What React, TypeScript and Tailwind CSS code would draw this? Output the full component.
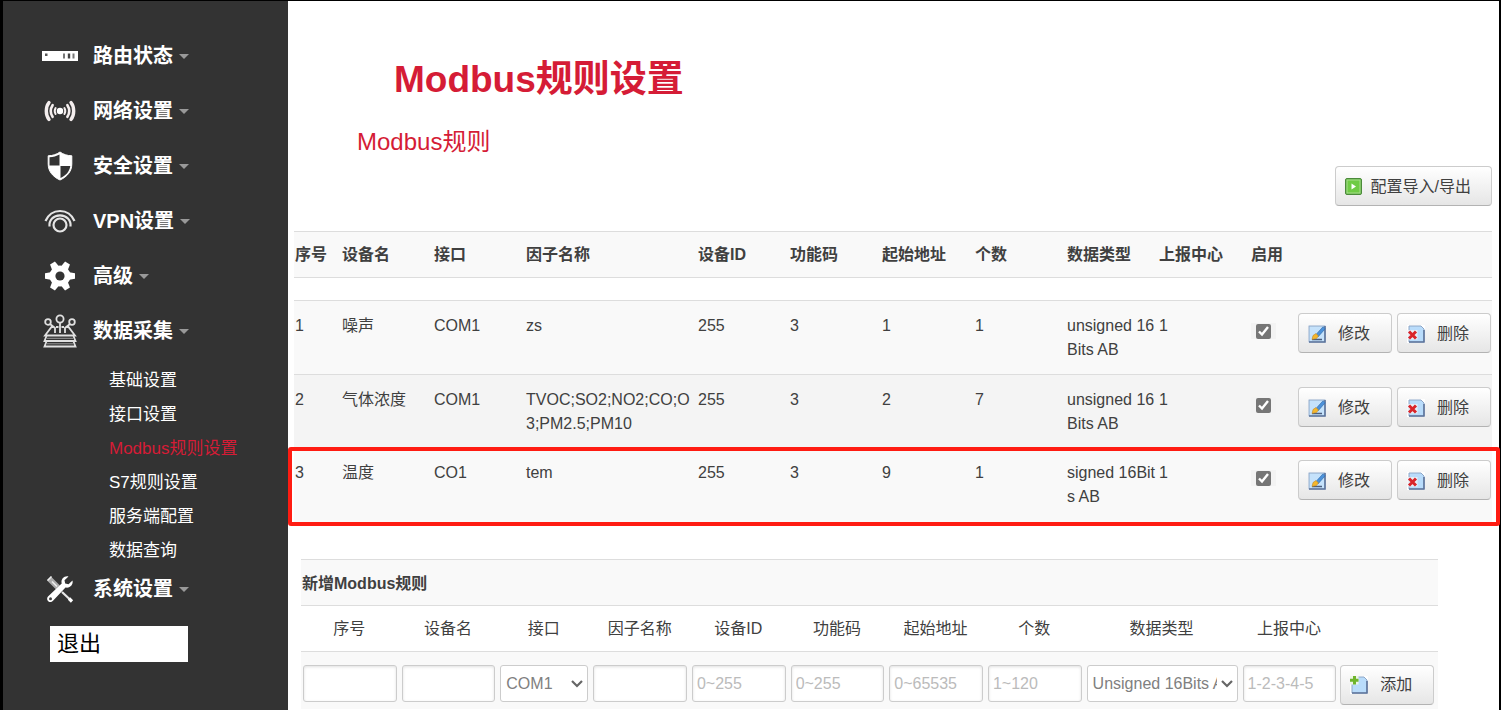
import type { ReactNode } from 'react';

type MenuItem = {
  label: string;
  icon: ReactNode;
  children?: string[];
};

type Rule = {
  id: number;
  device: string;
  port: string;
  factor: string;
  deviceId: number;
  func: number;
  address: number;
  count: number;
  dataType: string;
  center: string;
};

const RouterIcon = () => (
  <svg width="36" height="10" viewBox="0 0 36 10">
    <rect width="36" height="10" fill="#fff" />
    <rect x="3" y="2.5" width="2.5" height="2.5" fill="#555" />
    <path d="M22 2.5v5M31.5 2.5v5" stroke="#777" strokeWidth="2" />
    <path d="M27 2.5v5" stroke="#444" strokeWidth="2.4" />
  </svg>
);

const SignalIcon = () => (
  <svg width="32" height="22" viewBox="0 0 32 22" fill="none" stroke="#f4eeee" strokeLinecap="round">
    <circle cx="16" cy="11" r="3.2" fill="#fff" stroke="none" />
    <path d="M5 2.5C1.4 7 1.4 15 5 19.5M27 2.5c3.6 4.500 3.600 12.500 0 17" strokeWidth="3.4" />
    <path d="M8.600 5.200c-2.200 3.400-2.200 8.200 0 11.600M23.400 5.200c2.200 3.400 2.200 8.200 0 11.600" strokeWidth="2.600" />
    <path d="M11.600 8c-1.200 2-1.200 4 0 6M20.400 8c1.200 2 1.200 4 0 6" strokeWidth="2" />
  </svg>
);

const ShieldIcon = () => (
  <svg width="26" height="30" viewBox="0 0 26 30">
    <path
      d="M13 1C9.500 3.500 5.500 4.700 1.200 4.800V13c0 7.500 4.800 12.800 11.800 16 7-3.200 11.800-8.500 11.800-16V4.800C20.500 4.700 16.500 3.500 13 1z"
      fill="#fff"
      stroke="#fff"
      strokeWidth="1"
    />
    <path d="M12.500 3.500v11h-10V6.300c3.700-.200 7-1.200 10-2.800z" fill="#333" />
    <path d="M13.500 15h9.800c-.800 5.500-4.300 9.500-9.800 12z" fill="#333" />
  </svg>
);

const VpnIcon = () => (
  <svg width="32" height="24" viewBox="0 0 32 24" fill="none" stroke="#e4e4e4" strokeWidth="2.200">
    <circle cx="16" cy="16" r="6.500" />
    <path d="M5.500 17.500C4.800 11 9.500 6.300 16 6.300S27.200 11 26.500 17.500" />
    <path d="M1.500 12C4.500 5.200 9.800 2 16 2s11.500 3.200 14.500 10" />
  </svg>
);

const GearIcon = () => (
  <svg width="32" height="30" viewBox="0 0 32 30">
    <g fill="#fff" transform="translate(16 15)">
      <circle r="10.500" />
      <path d="M-4-8l1.200-7h5.600l1.200 7z" transform="rotate(30)" />
      <path d="M-4-8l1.200-7h5.600l1.200 7z" transform="rotate(90)" />
      <path d="M-4-8l1.200-7h5.600l1.200 7z" transform="rotate(150)" />
      <path d="M-4-8l1.200-7h5.600l1.200 7z" transform="rotate(210)" />
      <path d="M-4-8l1.200-7h5.600l1.200 7z" transform="rotate(270)" />
      <path d="M-4-8l1.200-7h5.600l1.200 7z" transform="rotate(330)" />
    </g>
    <circle cx="16" cy="15" r="4.600" fill="#333" />
  </svg>
);

const CollectIcon = () => (
  <svg width="34" height="34" viewBox="0 0 34 34" fill="none" stroke="#e0e0e0" strokeWidth="1.800">
    <circle cx="17" cy="5" r="3.600" />
    <circle cx="5" cy="8" r="2.800" />
    <circle cx="29" cy="8" r="2.800" />
    <path d="M17 8.500V19M7 10l5 4v5M27 10l-5 4v5" />
    <path d="M10.500 13H8.500L2 21.500h30L25.500 13h-2M13 13h2.500M18.500 13H21" />
    <path d="M3.500 22l-2 5h31l-2-5M3.500 27.500l-2 5h31l-2-5" />
    <path d="M4 24.300h26M4 29.800h26" stroke="#999" strokeWidth="1" />
  </svg>
);

const ToolsIcon = () => (
  <svg width="28" height="28" viewBox="0 0 28 28">
    <path d="M16 17l8.500 8" stroke="#e8e8e8" strokeWidth="2.200" />
    <path d="M23 23.500l3 3" stroke="#fff" strokeWidth="3.200" />
    <path d="M3 3.500l9 9" stroke="#aaa" strokeWidth="5.500" />
    <path d="M1.500 5.500l4-4M6 6.500l5 5" stroke="#eee" strokeWidth="1.600" />
    <path
      d="M22.500 1.500c-4-1-8 2.500-6.800 7L2 21.500c-1.500 1.700-1 4 .500 5 1.500 1 3.300.500 4.500-.700L19.500 12.500c4.500 1 8-3 7-7l-4 3.700-3.300-.700-.700-3.200z"
      fill="#fff"
    />
    <circle cx="4.500" cy="23.800" r="1.500" fill="#444" />
  </svg>
);

const PlayIcon = () => (
  <svg width="17" height="17" viewBox="0 0 17 17">
    <rect x="0.500" y="0.500" width="16" height="16" rx="1.500" fill="#5fae45" stroke="#4b8a3a" />
    <rect x="2" y="2" width="13" height="13" fill="#6fcb45" stroke="#a8dd8c" />
    <path d="M6.500 5.500v6l4.500-3z" fill="#fff" />
  </svg>
);

const EditIcon = () => (
  <svg width="18" height="18" viewBox="0 0 18 18">
    <rect width="18" height="18" fill="#fff" />
    <rect x="1" y="1" width="16" height="16" fill="#c5e2fb" stroke="#8ea6c6" />
    <path d="M1 17h16V1" stroke="#5d749b" strokeWidth="1.600" fill="none" />
    <path d="M4 14.500h10" stroke="#4a5d7d" strokeWidth="1.500" />
    <path d="M8 9.500 15 1.800l2.200 1.900-7 8z" fill="#4c92da" stroke="#2d66a8" strokeWidth="0.600" />
    <path d="M4 14.500l1-4L8 8.500l2.500 2.500L8.500 13.500z" fill="#f4b62c" stroke="#b8811a" strokeWidth="0.500" />
  </svg>
);

const DeleteIcon = () => (
  <svg width="18" height="18" viewBox="0 0 18 18">
    <rect width="18" height="18" fill="#fff" />
    <path d="M2 1h12l3 3v13H2z" fill="#b9dcfb" stroke="#8ea6c6" />
    <path d="M2 17h15V5" stroke="#5d749b" strokeWidth="1.600" fill="none" />
    <rect x="0.500" y="5" width="10" height="9.500" fill="#e8eef5" />
    <path d="M2 6.500l7 7M9 6.500l-7 7" stroke="#d9252a" strokeWidth="3" />
  </svg>
);

const AddIcon = () => (
  <svg width="18" height="18" viewBox="0 0 18 18">
    <rect width="18" height="18" fill="#fff" />
    <path d="M2 1h12l3 3v13H2z" fill="#b9dcfb" stroke="#8ea6c6" />
    <path d="M2 17h15V5" stroke="#5d749b" strokeWidth="1.600" fill="none" />
    <rect width="8.500" height="8.500" fill="#eef5e8" />
    <path d="M4.500 0v8.500M0 4.300h8.500" stroke="#6fb52c" strokeWidth="3" />
  </svg>
);

const menu: MenuItem[] = [
  { label: '路由状态', icon: <RouterIcon /> },
  { label: '网络设置', icon: <SignalIcon /> },
  { label: '安全设置', icon: <ShieldIcon /> },
  { label: 'VPN设置', icon: <VpnIcon /> },
  { label: '高级', icon: <GearIcon /> },
  {
    label: '数据采集',
    icon: <CollectIcon />,
    children: ['基础设置', '接口设置', 'Modbus规则设置', 'S7规则设置', '服务端配置', '数据查询'],
  },
  { label: '系统设置', icon: <ToolsIcon /> },
];

const rules: Rule[] = [
  { id: 1, device: '噪声', port: 'COM1', factor: 'zs', deviceId: 255, func: 3, address: 1, count: 1, dataType: 'unsigned 16Bits AB', center: '1' },
  { id: 2, device: '气体浓度', port: 'COM1', factor: 'TVOC;SO2;NO2;CO;O3;PM2.5;PM10', deviceId: 255, func: 3, address: 2, count: 7, dataType: 'unsigned 16Bits AB', center: '1' },
  { id: 3, device: '温度', port: 'CO1', factor: 'tem', deviceId: 255, func: 3, address: 9, count: 1, dataType: 'signed 16Bits AB', center: '1' },
];

const ruleHeads = ['序号', '设备名', '接口', '因子名称', '设备ID', '功能码', '起始地址', '个数', '数据类型', '上报中心', '启用'];

type ActionButtonProps = {
  icon: ReactNode;
  label: string;
  className?: string;
};

function ActionButton({ icon, label, className = 'w-[94px] gap-3' }: ActionButtonProps) {
  return (
    <button
      type="button"
      className={`inline-flex h-10 shrink-0 items-center rounded border border-[#ccc] border-b-[#b3b3b3] bg-linear-to-b from-white to-[#e6e6e6] pt-px pl-[9px] whitespace-nowrap ${className}`}
    >
      {icon}
      {label}
    </button>
  );
}

function Sidebar() {
  return (
    <nav className="w-[285px] shrink-0 bg-[#333] pt-[33px] text-white">
      <ul>
        {menu.map((item) => (
          <li key={item.label} className={item.children ? '' : 'mb-[11px]'}>
            <button type="button" className="flex h-11 items-center pl-[37px] text-xl font-bold">
              <span className="flex w-10 justify-center">{item.icon}</span>
              <span className="ml-[13px]">{item.label}</span>
              <span className="ml-1.5 border-x-5 border-t-5 border-x-transparent border-t-[#999]" />
            </button>
            {item.children && (
              <ul className="mt-[11px] -mb-px pl-[106px] text-[17px] leading-[34px]">
                {item.children.map((child) => (
                  <li key={child}>
                    <a href="#" className={child === 'Modbus规则设置' ? 'text-[#d51c36]' : ''}>
                      {child}
                    </a>
                  </li>
                ))}
              </ul>
            )}
          </li>
        ))}
      </ul>
      <button type="button" className="mt-1 ml-[47px] h-9 w-[138px] bg-white pl-[7px] text-left text-[22px] leading-9 text-black">
        退出
      </button>
    </nav>
  );
}

function RuleTable() {
  return (
    <div className="relative mt-[25px]">
      <table className="w-full table-fixed text-left leading-6">
        <colgroup>
          <col className="w-[47px]" />
          <col className="w-[92px]" />
          <col className="w-[92px]" />
          <col />
          <col className="w-[92px]" />
          <col className="w-[92px]" />
          <col className="w-[93px]" />
          <col className="w-[92px]" />
          <col className="w-[92px]" />
          <col className="w-[92px]" />
          <col className="w-[47px]" />
          <col className="w-[195px]" />
        </colgroup>
        <thead>
          <tr className="h-[46px] border-y border-[#ddd] bg-[#f9f9f9]">
            {ruleHeads.map((head) => (
              <th key={head} className="pl-px whitespace-nowrap">{head}</th>
            ))}
            <th aria-label="操作" />
          </tr>
          <tr className="h-[23px]">
            <td colSpan={12} />
          </tr>
        </thead>
        <tbody>
          {rules.map((rule) => (
            <tr key={rule.id} className="h-[74px] border-t border-[#ddd] bg-[#f9f9f9] align-top even:h-[73px] even:bg-[#f4f4f4]">
              {[rule.id, rule.device, rule.port, rule.factor, rule.deviceId, rule.func, rule.address, rule.count, rule.dataType, rule.center].map((value, i) => (
                <td key={i} className="pt-[13px] pl-px break-all">{value}</td>
              ))}
              <td className="pt-[22px] pl-px">
                <label className="flex h-4 w-[25px] items-center justify-center bg-[#f3f3f3]">
                  <input type="checkbox" defaultChecked aria-label={`启用 ${rule.device}`} className="size-[15px] accent-[#767676]" />
                </label>
              </td>
              <td className="pt-3 pl-px">
                <div className="flex gap-[5px]">
                  <ActionButton icon={<EditIcon />} label="修改" />
                  <ActionButton icon={<DeleteIcon />} label="删除" />
                </div>
              </td>
            </tr>
          ))}
        </tbody>
      </table>
      {/* Highlight around the last rule */}
      <div className="pointer-events-none absolute -right-2 -bottom-1 -left-1.5 h-[79px] rounded-[3px] border-4 border-[#ff1c12]" />
    </div>
  );
}

type FieldProps = {
  label: string;
  placeholder?: string;
};

const TextField = ({ label, placeholder }: FieldProps) => (
  <td className="pr-[3px] pl-0.5">
    <input
      type="text"
      aria-label={label}
      placeholder={placeholder}
      className="block h-[37px] w-full rounded-[3px] border border-[#ccc] bg-white px-1 pt-0.5 shadow-[inset_0_1px_3px_rgba(0,0,0,0.12)] placeholder:text-[#bbb]"
    />
  </td>
);

const SelectField = ({ label, options }: { label: string; options: string[] }) => (
  <td className="pr-[3px] pl-0.5">
    <div className="relative">
      <select
        aria-label={label}
        className="block h-[37px] w-full appearance-none rounded-[3px] border border-[#ccc] bg-white pt-0.5 pr-5 pl-[5px] text-[#808080]"
      >
        {options.map((option) => (
          <option key={option}>{option}</option>
        ))}
      </select>
      <svg className="pointer-events-none absolute top-[15px] right-[5px]" width="12" height="8" viewBox="0 0 12 8">
        <path d="M1 1l5 5 5-5" fill="none" stroke="#666" strokeWidth="2.2" />
      </svg>
    </div>
  </td>
);

function AddRuleForm() {
  return (
    <form className="mt-[37px] mr-[54px] ml-[7px]">
      <h3 className="h-[46px] border-t border-[#ddd] bg-[#f9f9f9] pl-px leading-[48px] font-bold">新增Modbus规则</h3>
      <table className="w-full table-fixed">
        <colgroup>
          <col />
          <col />
          <col className="w-[93px]" />
          <col />
          <col />
          <col />
          <col />
          <col />
          <col className="w-[156px]" />
          <col />
          <col />
        </colgroup>
        <thead>
          <tr className="h-[46px] border-y border-[#ddd]">
            {ruleHeads.slice(0, 10).map((head) => (
              <th key={head} className="pt-0.5 pr-0.5 font-normal">{head}</th>
            ))}
            <th aria-label="操作" />
          </tr>
        </thead>
        <tbody>
          <tr className="h-[58px] bg-[#f9f9f9] align-top [&>td]:pt-[13px]">
            <TextField label="序号" />
            <TextField label="设备名" />
            <SelectField label="接口" options={['COM1', 'CO1']} />
            <TextField label="因子名称" />
            <TextField label="设备ID" placeholder="0~255" />
            <TextField label="功能码" placeholder="0~255" />
            <TextField label="起始地址" placeholder="0~65535" />
            <TextField label="个数" placeholder="1~120" />
            <SelectField label="数据类型" options={['Unsigned 16Bits AB', 'Signed 16Bits AB']} />
            <TextField label="上报中心" placeholder="1-2-3-4-5" />
            <td className="pl-px">
              <ActionButton icon={<AddIcon />} label="添加" />
            </td>
          </tr>
        </tbody>
      </table>
    </form>
  );
}

export default function App() {
  return (
    <div className="flex min-h-screen border-t border-r-2 border-l-3 border-black bg-white font-['Liberation_Sans','Noto_Sans_CJK_SC',sans-serif] text-base text-[#404040]">
      <Sidebar />
      <main className="min-w-0 flex-1 pt-[57px] pr-[7px] pl-1.5">
        <h1 className="ml-[100px] text-[37px] leading-[44px] font-bold text-[#d51c36]">Modbus规则设置</h1>
        <h2 className="mt-[25px] ml-[63px] text-2xl leading-[30px] text-[#d51c36]">Modbus规则</h2>
        <div className="mt-[9px] flex justify-end">
          <ActionButton icon={<PlayIcon />} label="配置导入/导出" className="gap-[9px] pr-5" />
        </div>
        <RuleTable />
        <AddRuleForm />
      </main>
    </div>
  );
}
